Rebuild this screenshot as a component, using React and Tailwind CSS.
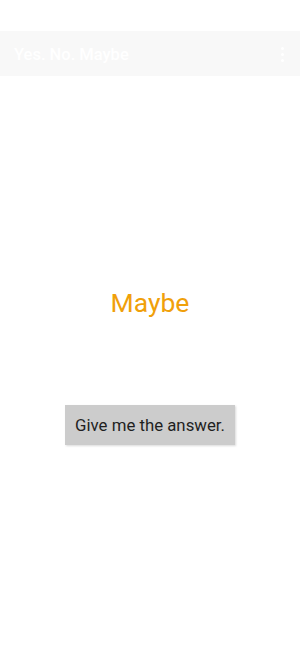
export default function App() {
  return (
    <div
      className="flex h-[650px] w-[300px] flex-col bg-white"
      style={{ fontFamily: "Roboto, 'Liberation Sans', sans-serif" }}
    >
      <div className="h-[31px]" />
      <div className="flex h-[45px] items-center justify-between bg-[#f8f8f8] pl-[14px] pr-[16px]">
        <span className="pt-[3px] text-[16.5px] font-medium text-white">Yes. No. Maybe</span>
        <div className="flex flex-col gap-[3px] pt-[2px]">
          <span className="h-[3px] w-[3px] rounded-full bg-white" />
          <span className="h-[3px] w-[3px] rounded-full bg-white" />
          <span className="h-[3px] w-[3px] rounded-full bg-white" />
        </div>
      </div>
      <div className="flex flex-col items-center">
        <div className="mt-[211px] text-[26.5px] leading-[32px] text-[#f0a00a]">Maybe</div>
        <button className="mt-[86px] h-[40px] w-[170px] bg-[#cccccc] pt-[2px] text-[16.8px] text-[#1f1f1f] shadow-[1px_1px_2px_rgba(0,0,0,0.15)]">
          Give me the answer.
        </button>
      </div>
    </div>
  );
}
